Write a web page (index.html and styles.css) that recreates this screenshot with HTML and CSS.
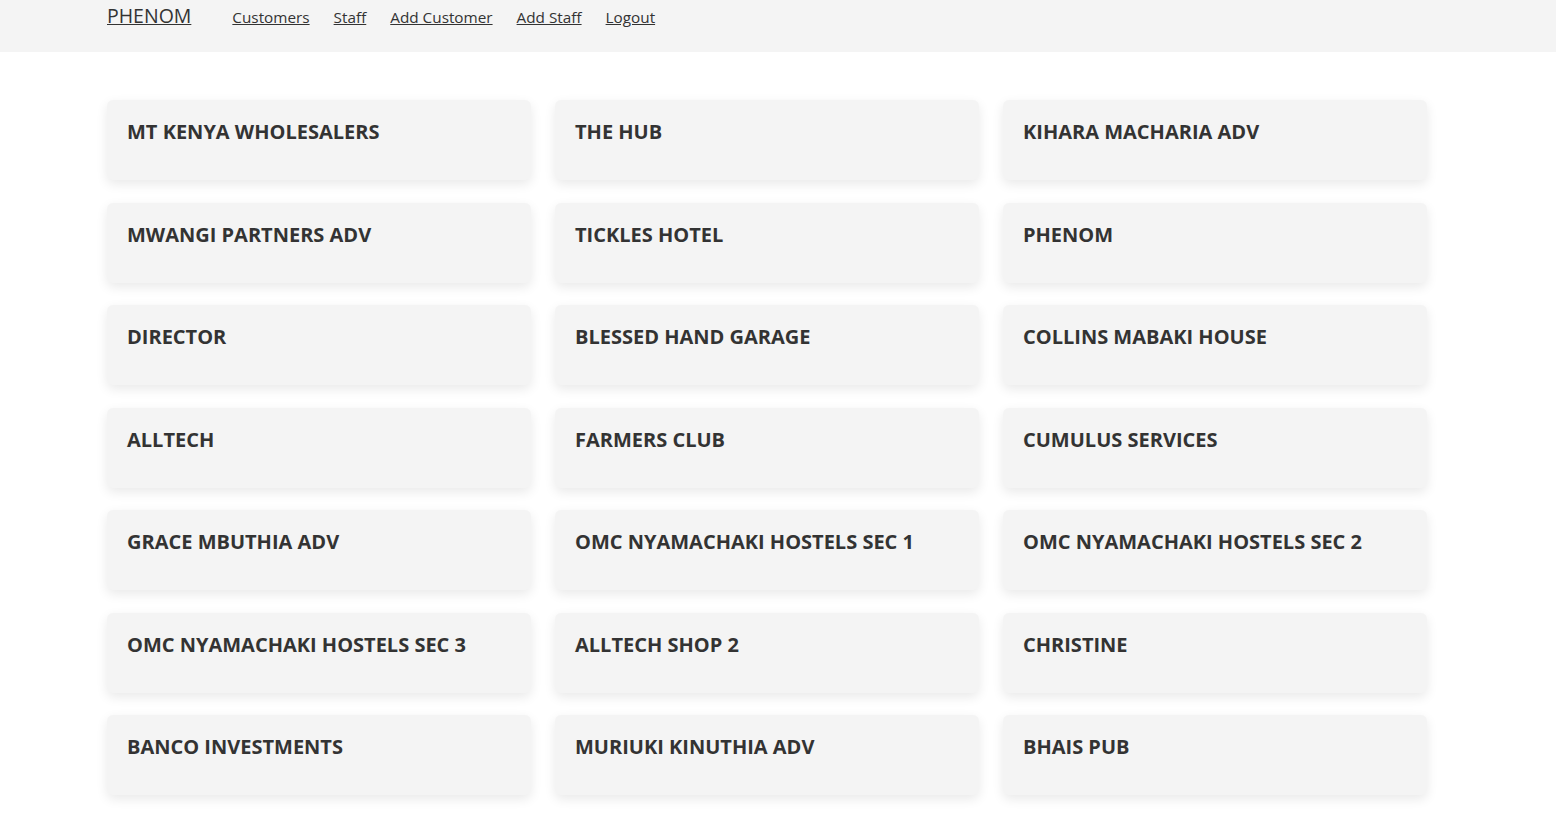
FILE: index.html
```html
<!DOCTYPE html>
<html lang="en">
<head>
<meta charset="utf-8">
<title>PHENOM</title>
<link rel="stylesheet" href="styles.css">
</head>
<body>
<header class="topbar">
  <nav class="nav">
    <a class="brand" href="#">PHENOM</a>
    <ul class="nav-links">
      <li><a href="#">Customers</a></li>
      <li><a href="#">Staff</a></li>
      <li><a href="#">Add Customer</a></li>
      <li><a href="#">Add Staff</a></li>
      <li><a href="#">Logout</a></li>
    </ul>
  </nav>
</header>
<main class="content">
  <div class="grid">
    <div class="card"><h2 class="card-title">MT KENYA WHOLESALERS</h2></div>
    <div class="card"><h2 class="card-title">THE HUB</h2></div>
    <div class="card"><h2 class="card-title">KIHARA MACHARIA ADV</h2></div>
    <div class="card"><h2 class="card-title">MWANGI PARTNERS ADV</h2></div>
    <div class="card"><h2 class="card-title">TICKLES HOTEL</h2></div>
    <div class="card"><h2 class="card-title">PHENOM</h2></div>
    <div class="card"><h2 class="card-title">DIRECTOR</h2></div>
    <div class="card"><h2 class="card-title">BLESSED HAND GARAGE</h2></div>
    <div class="card"><h2 class="card-title">COLLINS MABAKI HOUSE</h2></div>
    <div class="card"><h2 class="card-title">ALLTECH</h2></div>
    <div class="card"><h2 class="card-title">FARMERS CLUB</h2></div>
    <div class="card"><h2 class="card-title">CUMULUS SERVICES</h2></div>
    <div class="card"><h2 class="card-title">GRACE MBUTHIA ADV</h2></div>
    <div class="card"><h2 class="card-title">OMC NYAMACHAKI HOSTELS SEC 1</h2></div>
    <div class="card"><h2 class="card-title">OMC NYAMACHAKI HOSTELS SEC 2</h2></div>
    <div class="card"><h2 class="card-title">OMC NYAMACHAKI HOSTELS SEC 3</h2></div>
    <div class="card"><h2 class="card-title">ALLTECH SHOP 2</h2></div>
    <div class="card"><h2 class="card-title">CHRISTINE</h2></div>
    <div class="card"><h2 class="card-title">BANCO INVESTMENTS</h2></div>
    <div class="card"><h2 class="card-title">MURIUKI KINUTHIA ADV</h2></div>
    <div class="card"><h2 class="card-title">BHAIS PUB</h2></div>
  </div>
</main>
</body>
</html>
```
FILE: styles.css
```css
* { box-sizing: border-box; }
html, body { margin: 0; padding: 0; }
body {
  background: #ffffff;
  color: #333333;
  font-family: "Open Sans", "Noto Sans", sans-serif;
}
.topbar {
  background: #f4f4f4;
  height: 52px;
}
.nav {
  display: flex;
  align-items: baseline;
  padding: 2px 0 0 107px;
}
.brand {
  color: #333333;
  font-size: 19.5px;
  text-decoration: underline;
  margin-right: 41px;
}
.nav-links {
  list-style: none;
  margin: 0;
  padding: 0;
  display: flex;
  gap: 24px;
}
.nav-links a {
  color: #333333;
  font-size: 15.3px;
  text-decoration: underline;
}
.content {
  padding: 48px 0 40px 107px;
}
.grid {
  display: grid;
  grid-template-columns: repeat(3, 424px);
  column-gap: 24px;
  row-gap: 22.5px;
}
.card {
  height: 80px;
  background: #f4f4f4;
  border-radius: 6px;
  box-shadow: 0 4px 12px rgba(0, 0, 0, 0.09);
  padding: 18px 20px;
}
.card-title {
  margin: 0;
  font-size: 20px;
  font-weight: 700;
  line-height: 28px;
  color: #333333;
}
```
